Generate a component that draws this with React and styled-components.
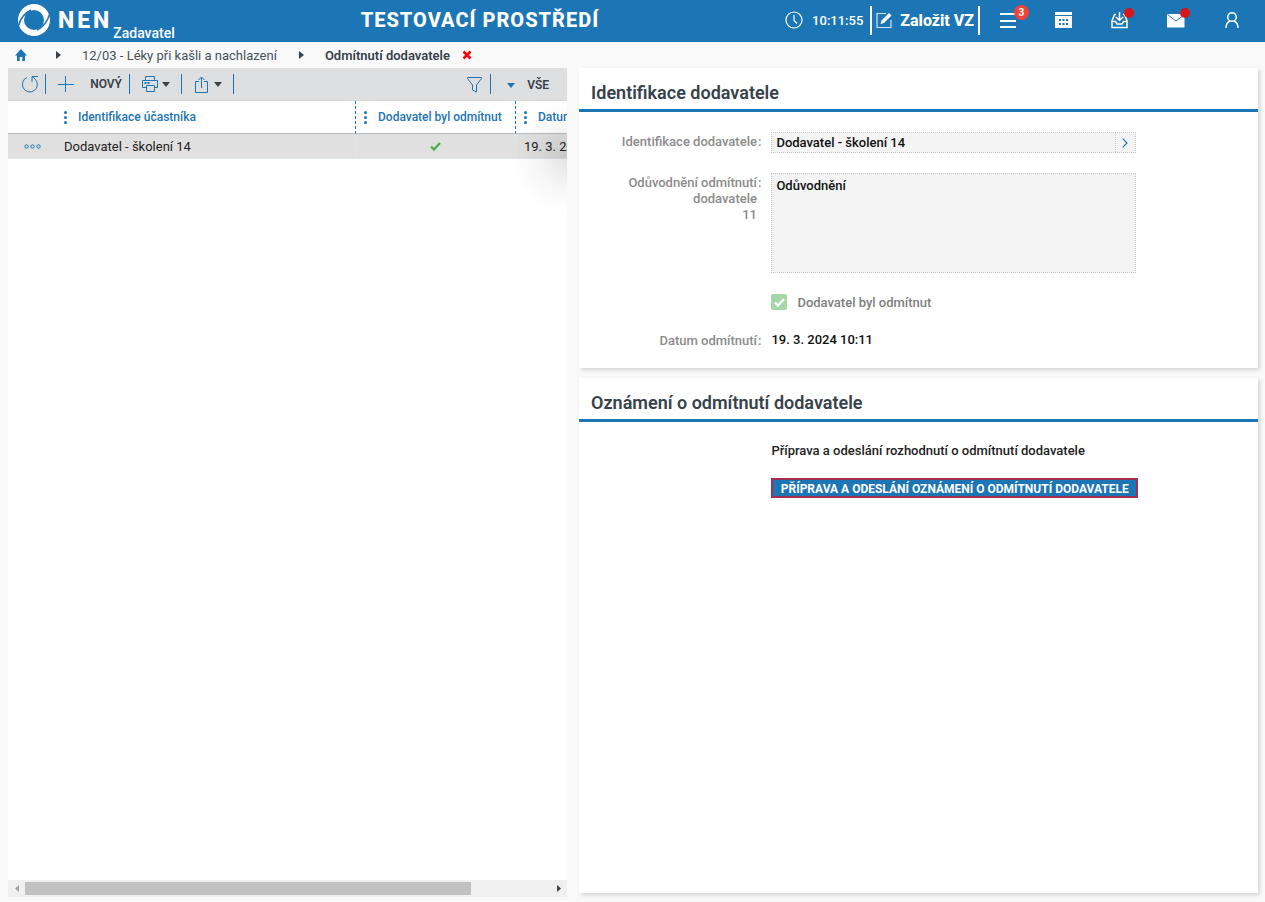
import styled, { createGlobalStyle } from 'styled-components';

const BLUE = '#1c75b4';
const DARK = '#37424a';

const menuItems = [
  { id: 'menu', label: 'Menu', badge: '3', Icon: MenuIcon },
  { id: 'calendar', label: 'Kalendář', Icon: CalendarIcon },
  { id: 'inbox', label: 'Přijaté', dot: true, Icon: InboxIcon },
  { id: 'mail', label: 'Zprávy', dot: true, Icon: MailIcon },
  { id: 'user', label: 'Uživatel', Icon: UserIcon },
];

const suppliers = [{ id: 1, name: 'Dodavatel - školení 14', rejected: true, date: '19. 3. 2024 10:11' }];

function App() {
  return (
    <>
      <GlobalStyle />
      <S.Page>
        <Header />
        <Breadcrumb />
        <S.Main>
          <SupplierList />
          <S.Detail>
            <SupplierCard />
            <NoticeCard />
          </S.Detail>
        </S.Main>
      </S.Page>
    </>
  );
}

export default App;

function Header() {
  return (
    <S.Header>
      <S.Brand>
        <LogoIcon />
        <S.BrandName>NEN</S.BrandName>
        <S.BrandRole>Zadavatel</S.BrandRole>
      </S.Brand>
      <S.Environment>TESTOVACÍ PROSTŘEDÍ</S.Environment>
      <S.HeaderTools>
        <ClockIcon />
        <S.Time>10:11:55</S.Time>
        <S.CreateButton type="button">
          <EditIcon />
          Založit VZ
        </S.CreateButton>
        {menuItems.map(({ id, label, badge, dot, Icon }) => (
          <S.MenuButton key={id} type="button" aria-label={label}>
            <Icon />
            {badge && <S.Badge>{badge}</S.Badge>}
            {dot && <S.Dot />}
          </S.MenuButton>
        ))}
      </S.HeaderTools>
    </S.Header>
  );
}

function Breadcrumb() {
  return (
    <S.Breadcrumb aria-label="Navigace">
      <S.HomeLink href="#" aria-label="Domů">
        <HomeIcon />
      </S.HomeLink>
      <CrumbArrow />
      <S.Crumb href="#">12/03 - Léky při kašli a nachlazení</S.Crumb>
      <CrumbArrow />
      <S.CurrentCrumb>Odmítnutí dodavatele</S.CurrentCrumb>
      <S.CloseButton type="button" aria-label="Zavřít">
        <CloseIcon />
      </S.CloseButton>
    </S.Breadcrumb>
  );
}

function SupplierList() {
  return (
    <S.List>
      <S.Toolbar>
        <S.ToolGroup $width={38} $end={6}>
          <S.ToolButton type="button" aria-label="Obnovit">
            <RefreshIcon />
          </S.ToolButton>
        </S.ToolGroup>
        <S.ToolGroup $width={84} $end={7}>
          <S.ToolButton type="button" $gap={16}>
            <PlusIcon />
            NOVÝ
          </S.ToolButton>
        </S.ToolGroup>
        <S.ToolGroup $width={52} $end={11}>
          <S.ToolButton type="button" aria-label="Tisk" $gap={3}>
            <PrintIcon />
            <Caret color={DARK} />
          </S.ToolButton>
        </S.ToolGroup>
        <S.ToolGroup $width={52} $end={11}>
          <S.ToolButton type="button" aria-label="Export" $gap={4}>
            <ShareIcon />
            <Caret color={DARK} />
          </S.ToolButton>
        </S.ToolGroup>
        <S.Spacer />
        <S.ToolGroup $width={34} $end={8}>
          <S.ToolButton type="button" aria-label="Filtr">
            <FilterIcon />
          </S.ToolButton>
        </S.ToolGroup>
        <S.ViewButton type="button">
          <Caret color={BLUE} />
          VŠE
        </S.ViewButton>
      </S.Toolbar>
      <S.TableArea>
        <S.Table>
          <colgroup>
            <col width="48" />
            <col width="300" />
            <col width="160" />
            <col width="150" />
          </colgroup>
          <thead>
            <tr>
              <S.Th aria-label="Akce" />
              <S.Th $divided>
                <S.HeadCell>
                  <DotsIcon />
                  Identifikace účastníka
                </S.HeadCell>
              </S.Th>
              <S.Th $divided>
                <S.HeadCell>
                  <DotsIcon />
                  Dodavatel byl odmítnut
                </S.HeadCell>
              </S.Th>
              <S.Th>
                <S.HeadCell>
                  <DotsIcon />
                  Datum odmítnutí
                </S.HeadCell>
              </S.Th>
            </tr>
          </thead>
          <tbody>
            {suppliers.map((item) => (
              <tr key={item.id}>
                <S.Td>
                  <S.RowButton type="button" aria-label="Akce řádku">
                    <MoreIcon />
                  </S.RowButton>
                </S.Td>
                <S.Td $divided>{item.name}</S.Td>
                <S.Td $divided>{item.rejected && <CheckIcon color="#4caf50" />}</S.Td>
                <S.Td>{item.date}</S.Td>
              </tr>
            ))}
          </tbody>
        </S.Table>
        <S.Shade />
      </S.TableArea>
      <S.Scrollbar>
        <S.ScrollButton type="button" aria-label="Posunout vlevo">
          <ScrollArrow left />
        </S.ScrollButton>
        <S.Track>
          <S.Thumb />
        </S.Track>
        <S.ScrollButton type="button" aria-label="Posunout vpravo">
          <ScrollArrow />
        </S.ScrollButton>
      </S.Scrollbar>
    </S.List>
  );
}

function FieldLabel({ htmlFor, children, count }) {
  return (
    <S.Label htmlFor={htmlFor}>
      <span>
        {children}
        {count && <S.Count>{count}</S.Count>}
      </span>
      <span>:</span>
    </S.Label>
  );
}

function SupplierCard() {
  return (
    <S.Card>
      <S.CardTitle>Identifikace dodavatele</S.CardTitle>
      <S.Form>
        <FieldLabel htmlFor="supplier">Identifikace dodavatele</FieldLabel>
        <S.Lookup>
          <S.LookupInput id="supplier" readOnly value="Dodavatel - školení 14" />
          <S.LookupButton type="button" aria-label="Otevřít dodavatele">
            <ChevronIcon />
          </S.LookupButton>
        </S.Lookup>
        <FieldLabel htmlFor="reason" count="11">
          Odůvodnění odmítnutí dodavatele
        </FieldLabel>
        <S.Textarea id="reason" readOnly value="Odůvodnění" />
        <S.CheckRow>
          <S.CheckBoxWrap>
            <S.CheckInput type="checkbox" id="rejected" checked disabled readOnly />
            <CheckIcon color="#fff" />
          </S.CheckBoxWrap>
          <label htmlFor="rejected">Dodavatel byl odmítnut</label>
        </S.CheckRow>
        <FieldLabel htmlFor="date">Datum odmítnutí</FieldLabel>
        <S.Output id="date">19. 3. 2024 10:11</S.Output>
      </S.Form>
    </S.Card>
  );
}

function NoticeCard() {
  return (
    <S.Card $grow>
      <S.CardTitle>Oznámení o odmítnutí dodavatele</S.CardTitle>
      <S.Form>
        <S.Text>Příprava a odeslání rozhodnutí o odmítnutí dodavatele</S.Text>
        <S.ActionButton type="button">PŘÍPRAVA A ODESLÁNÍ OZNÁMENÍ O ODMÍTNUTÍ DODAVATELE</S.ActionButton>
      </S.Form>
    </S.Card>
  );
}

function LogoIcon() {
  return (
    <svg width="34" height="34" viewBox="0 0 34 34" fill="none">
      <circle cx="17" cy="17" r="16" fill="#fff" />
      <circle cx="17" cy="17" r="10" fill={BLUE} />
      <path d="M1 24C3 17 7 10 14 7" stroke={BLUE} strokeWidth="1.5" />
      <path d="M33 10c-2 7-6 14-13 17" stroke={BLUE} strokeWidth="1.5" />
    </svg>
  );
}

function ClockIcon() {
  return (
    <svg width="18" height="18" viewBox="0 0 18 18" fill="none" stroke="#fff" strokeWidth="1.2">
      <circle cx="9" cy="9" r="8" />
      <path d="M9 4v5.500l3 3" />
    </svg>
  );
}

function EditIcon() {
  return (
    <svg width="17" height="17" viewBox="0 0 17 17" fill="none">
      <path d="M10 1.500H1v14h14V8" stroke="#d4e5f2" strokeWidth="1.200" />
      <path d="M4.500 12l1-3.500L13 1l2.500 2.500L8 11z" fill="#fff" />
    </svg>
  );
}

function MenuIcon() {
  return (
    <svg width="18" height="18" viewBox="0 0 18 18" fill="#fff">
      <rect x="1" y="2" width="16" height="2" />
      <rect x="1" y="9" width="16" height="2" />
      <rect x="1" y="15" width="16" height="2" />
    </svg>
  );
}

function CalendarIcon() {
  return (
    <svg width="18" height="18" viewBox="0 0 18 18">
      <path d="M0 1h17v3H0zM0 5h17v12H0z" fill="#fff" />
      <path
        d="M4 8h2v2H4zM7.500 8h2v2h-2zM11 8h2v2h-2zM4 12h2v2H4zM7.500 12h2v2h-2zM11 12h2v2h-2z"
        fill={BLUE}
      />
    </svg>
  );
}

function InboxIcon() {
  return (
    <svg width="18" height="18" viewBox="0 0 18 18" fill="none" stroke="#fff" strokeWidth="1.500">
      <path d="M5 3.500H3.500L1 10v6.500h15V10l-2.500-6.500H12" />
      <path d="M1 10.500h3.500L6 13h5l1.500-2.500H16" />
      <path d="M8.500 1v8M5 6l3.500 3.500L12 6" />
    </svg>
  );
}

function MailIcon() {
  return (
    <svg width="18" height="18" viewBox="0 0 18 18">
      <path d="M0 3h17.500v13.500H0z" fill="#fff" />
      <path d="M0.500 3.500L9 10l8.500-6.500" fill="none" stroke={BLUE} />
    </svg>
  );
}

function UserIcon() {
  return (
    <svg width="18" height="18" viewBox="0 0 18 18" fill="none" stroke="#fff" strokeWidth="1.500">
      <circle cx="9" cy="6" r="4.300" />
      <path d="M3 17c0-4 1.500-6 4-7M15 17c0-4-1.500-6-4-7" />
    </svg>
  );
}

function HomeIcon() {
  return (
    <svg width="12" height="12" viewBox="0 0 12 12" fill={BLUE}>
      <path d="M6 0L0 6.500h2V12h2.700V8h2.600v4H10V6.500h2z" />
    </svg>
  );
}

function CrumbArrow() {
  return (
    <svg width="5" height="8" viewBox="0 0 5 8" fill={DARK}>
      <path d="M0 0l5 4-5 4z" />
    </svg>
  );
}

function CloseIcon() {
  return (
    <svg width="10" height="10" viewBox="0 0 10 10" stroke="#fb0007" strokeWidth="2.600">
      <path d="M1.500 1.500l7 7M8.500 1.500l-7 7" />
    </svg>
  );
}

function RefreshIcon() {
  return (
    <svg width="18" height="18" viewBox="0 0 18 18" fill="none" stroke={BLUE}>
      <path d="M6 2.500a7.500 7.500 0 1 0 8.500 2L11 1.500" />
      <path d="M11 7V1.500h6" />
    </svg>
  );
}

function PlusIcon() {
  return (
    <svg width="16" height="16" viewBox="0 0 16 16" stroke={BLUE}>
      <path d="M7.500 0v16M0 8.500h16" />
    </svg>
  );
}

function PrintIcon() {
  return (
    <svg width="17" height="16" viewBox="0 0 17 16" fill="none" stroke={BLUE}>
      <path d="M3.500 4V.5h9V4M4 11.500H.5v-7h15v7H13" />
      <path d="M4.500 9.500h8v6h-8z" />
      <path d="M2.500 7h2M5.500 7h2" strokeWidth="2" />
    </svg>
  );
}

function ShareIcon() {
  return (
    <svg width="16" height="17" viewBox="0 0 16 17" fill="none" stroke={BLUE}>
      <path d="M5 5.500H1.500v11h12v-11H10M7.500 12V1M4.500 4l3-3 3 3" />
    </svg>
  );
}

function Caret({ color }) {
  return (
    <svg width="8" height="5" viewBox="0 0 8 5" fill={color}>
      <path d="M0 0h8L4 5z" />
    </svg>
  );
}

function FilterIcon() {
  return (
    <svg width="15" height="17" viewBox="0 0 15 17" fill="none" stroke={BLUE}>
      <path d="M.5 1.500h14v1L9.500 9v7l-4-2V9L.5 2.500z" />
    </svg>
  );
}

function DotsIcon() {
  return (
    <svg width="3" height="13" viewBox="0 0 3 13" fill={BLUE}>
      <circle cx="1.500" cy="1.500" r="1.500" />
      <circle cx="1.500" cy="6.500" r="1.500" />
      <circle cx="1.500" cy="11.500" r="1.500" />
    </svg>
  );
}

function MoreIcon() {
  return (
    <svg width="17" height="5" viewBox="0 0 17 5" fill="none" stroke={BLUE}>
      <circle cx="2.500" cy="2.500" r="1.700" />
      <circle cx="8.500" cy="2.500" r="1.700" />
      <circle cx="14.500" cy="2.500" r="1.700" />
    </svg>
  );
}

function CheckIcon({ color }) {
  return (
    <svg width="11" height="9" viewBox="0 0 11 9" fill="none" stroke={color} strokeWidth="2.400">
      <path d="M1 4.500l3 3L10 1" />
    </svg>
  );
}

function ChevronIcon() {
  return (
    <svg width="6" height="10" viewBox="0 0 6 10" fill="none" stroke={BLUE} strokeWidth="1.200">
      <path d="M.7.700L5 5 .7 9.300" />
    </svg>
  );
}

function ScrollArrow({ left }) {
  return (
    <svg width="4" height="7" viewBox="0 0 4 7" fill={left ? '#a3a3a3' : '#404040'}>
      <path d={left ? 'M4 0v7L0 3.500z' : 'M0 0v7l4-3.500z'} />
    </svg>
  );
}

const GlobalStyle = createGlobalStyle`
  *, *::before, *::after {
    box-sizing: border-box;
  }
  body {
    margin: 0;
    background: #f9f9f9;
    font-family: Roboto, 'Liberation Sans', sans-serif;
    font-size: 13px;
  }
  button, input, textarea {
    margin: 0;
    padding: 0;
    border: 0;
    border-radius: 0;
    background: none;
    font: inherit;
    color: inherit;
  }
  svg {
    display: block;
    flex: none;
  }
`;

const S = {
  Page: styled.div`
    display: flex;
    flex-direction: column;
    min-height: 100vh;
  `,
  Header: styled.header`
    display: flex;
    justify-content: space-between;
    align-items: center;
    height: 42px;
    padding: 0 5px 2px 17px;
    background: ${BLUE};
    color: #fff;
  `,
  Brand: styled.div`
    display: flex;
    align-items: center;
    height: 40px;
  `,
  BrandName: styled.span`
    margin: 0 1px 0 7px;
    font-size: 23px;
    font-weight: 800;
    letter-spacing: 3px;
  `,
  BrandRole: styled.span`
    align-self: flex-end;
    font-size: 14px;
    line-height: 14px;
    font-weight: 500;
  `,
  Environment: styled.h1`
    margin: 0;
    font-size: 20px;
    line-height: 40px;
    font-weight: 800;
    letter-spacing: 1px;
  `,
  HeaderTools: styled.div`
    display: flex;
    align-items: center;
    height: 40px;
  `,
  Time: styled.time`
    margin: 0 7px 0 9px;
    font-weight: 500;
  `,
  CreateButton: styled.button`
    display: flex;
    align-items: center;
    gap: 7px;
    height: 29px;
    padding: 0 4px;
    border: solid #fff;
    border-width: 0 2px;
    font-size: 16px;
    font-weight: 800;
  `,
  MenuButton: styled.button`
    position: relative;
    display: flex;
    justify-content: center;
    align-items: center;
    width: 56px;
    height: 40px;
  `,
  Badge: styled.span`
    position: absolute;
    top: 5px;
    right: 7px;
    width: 15px;
    border-radius: 8px;
    background: #f44336;
    font-size: 10px;
    line-height: 15px;
    font-weight: 700;
    text-align: center;
  `,
  Dot: styled.span`
    position: absolute;
    top: 8px;
    right: 14px;
    width: 10px;
    height: 10px;
    border-radius: 50%;
    background: #d8151b;
  `,
  Breadcrumb: styled.nav`
    display: flex;
    align-items: center;
    height: 26px;
    padding-left: 15px;
    color: ${DARK};
    > svg {
      margin-right: 21px;
    }
  `,
  HomeLink: styled.a`
    margin-right: 29px;
  `,
  Crumb: styled.a`
    margin-right: 22px;
    color: #46525a;
    text-decoration: none;
  `,
  CurrentCrumb: styled.span`
    font-weight: 600;
  `,
  CloseButton: styled.button`
    margin-left: 12px;
  `,
  Main: styled.main`
    flex: 1;
    display: grid;
    grid-template-columns: minmax(0, 14fr) minmax(0, 17fr);
    gap: 12px;
    padding: 0 7px 5px 8px;
  `,
  List: styled.section`
    display: flex;
    flex-direction: column;
    background: #fff;
  `,
  Toolbar: styled.div`
    display: flex;
    align-items: center;
    height: 33px;
    border-bottom: 1px solid #d6d6d6;
    background: #dedfe1;
    color: ${DARK};
  `,
  ToolGroup: styled.div`
    display: flex;
    justify-content: flex-end;
    width: ${(props) => props.$width}px;
    height: 20px;
    padding-right: ${(props) => props.$end}px;
    border-right: 1px solid ${BLUE};
  `,
  ToolButton: styled.button`
    display: flex;
    align-items: center;
    gap: ${(props) => props.$gap || 0}px;
    height: 20px;
    font-size: 12px;
    font-weight: 600;
  `,
  Spacer: styled.div`
    flex: 1;
  `,
  ViewButton: styled.button`
    display: flex;
    align-items: center;
    gap: 12px;
    padding: 2px 18px 0 16px;
    font-size: 12px;
    font-weight: 600;
  `,
  TableArea: styled.div`
    position: relative;
    flex: 1;
    overflow: hidden;
  `,
  Table: styled.table`
    width: 658px;
    table-layout: fixed;
    border-collapse: separate;
    border-spacing: 0;
  `,
  Th: styled.th`
    height: 33px;
    padding: 0 8px;
    border-bottom: 1px solid #bdbdbd;
    border-right: ${(props) => (props.$divided ? `1px dashed ${BLUE}` : '0')};
    color: ${BLUE};
    font-size: 12px;
    font-weight: 500;
    text-align: left;
    white-space: nowrap;
  `,
  HeadCell: styled.div`
    display: flex;
    align-items: center;
    gap: 11px;
  `,
  Td: styled.td`
    height: 25px;
    padding: 0 8px;
    border-bottom: 1px solid #dfe6ec;
    border-right: ${(props) => (props.$divided ? '1px dotted #e8e8e8' : '0')};
    background: #e0e0e0;
    color: #222;
    white-space: nowrap;
    > svg {
      margin: 0 auto;
    }
  `,
  RowButton: styled.button`
    display: block;
    padding: 4px 8px;
  `,
  Shade: styled.div`
    position: absolute;
    top: 0;
    right: 0;
    width: 56px;
    height: 112px;
    pointer-events: none;
    background: radial-gradient(circle at 100% 50%, rgba(0, 0, 0, 0.11), rgba(0, 0, 0, 0.03) 32px, transparent 56px);
  `,
  Scrollbar: styled.div`
    display: flex;
    height: 17px;
    padding: 2px 0;
    background: #f0f0f0;
  `,
  ScrollButton: styled.button`
    display: flex;
    justify-content: center;
    align-items: center;
    width: 17px;
  `,
  Track: styled.div`
    flex: 1;
  `,
  Thumb: styled.div`
    width: 85%;
    height: 13px;
    background: #c1c1c1;
  `,
  Detail: styled.div`
    display: flex;
    flex-direction: column;
    gap: 10px;
    padding-bottom: 4px;
  `,
  Card: styled.section`
    flex: ${(props) => (props.$grow ? '1' : 'none')};
    background: #fff;
    box-shadow: 2px 2px 4px rgba(0, 0, 0, 0.15);
  `,
  CardTitle: styled.h2`
    margin: 0;
    padding: 9px 12px 0;
    border-bottom: 3px solid ${BLUE};
    color: ${DARK};
    font-size: 18px;
    line-height: 32px;
    font-weight: 600;
  `,
  Form: styled.div`
    display: grid;
    grid-template-columns: 27% 54%;
    gap: 20px 9px;
    padding: 20px 0 19px;
  `,
  Label: styled.label`
    display: flex;
    justify-content: flex-end;
    gap: 1px;
    padding: 2px 1px 0 40px;
    color: #8b8b8b;
    font-weight: 500;
    line-height: 16px;
    text-align: right;
  `,
  Count: styled.span`
    display: block;
  `,
  Lookup: styled.div`
    display: flex;
    height: 21px;
    margin-right: 2px;
    border: 1px dotted #c9c9c9;
    background: #f4f4f4;
  `,
  LookupInput: styled.input`
    flex: 1;
    min-width: 0;
    padding-left: 4px;
    font-weight: 500;
    color: #111;
  `,
  LookupButton: styled.button`
    display: flex;
    justify-content: center;
    align-items: center;
    width: 20px;
    border-left: 1px dotted #c9c9c9;
  `,
  Textarea: styled.textarea`
    height: 100px;
    margin-right: 2px;
    padding: 4px;
    border: 1px dotted #c9c9c9;
    background: #f4f4f4;
    color: #111;
    font-weight: 500;
    line-height: 16px;
    resize: none;
  `,
  CheckRow: styled.div`
    grid-column: 2;
    display: flex;
    align-items: center;
    gap: 10px;
    height: 18px;
    color: #808080;
    font-weight: 500;
  `,
  CheckBoxWrap: styled.span`
    display: grid;
    place-items: center;
    > * {
      grid-area: 1 / 1;
    }
  `,
  CheckInput: styled.input`
    appearance: none;
    width: 16px;
    height: 16px;
    border-radius: 2px;
    background: #a5d7a7;
  `,
  Output: styled.output`
    color: #111;
    font-weight: 500;
    line-height: 18px;
  `,
  Text: styled.p`
    grid-column: 2;
    height: 16px;
    margin: 0;
    color: #222;
    font-weight: 500;
    line-height: 18px;
    white-space: nowrap;
  `,
  ActionButton: styled.button`
    grid-column: 2;
    height: 20px;
    padding-top: 1px;
    border: 2px solid #a03050;
    background: ${BLUE};
    color: #fff;
    font-size: 12px;
    line-height: 16px;
    font-weight: 700;
    white-space: nowrap;
  `,
};
